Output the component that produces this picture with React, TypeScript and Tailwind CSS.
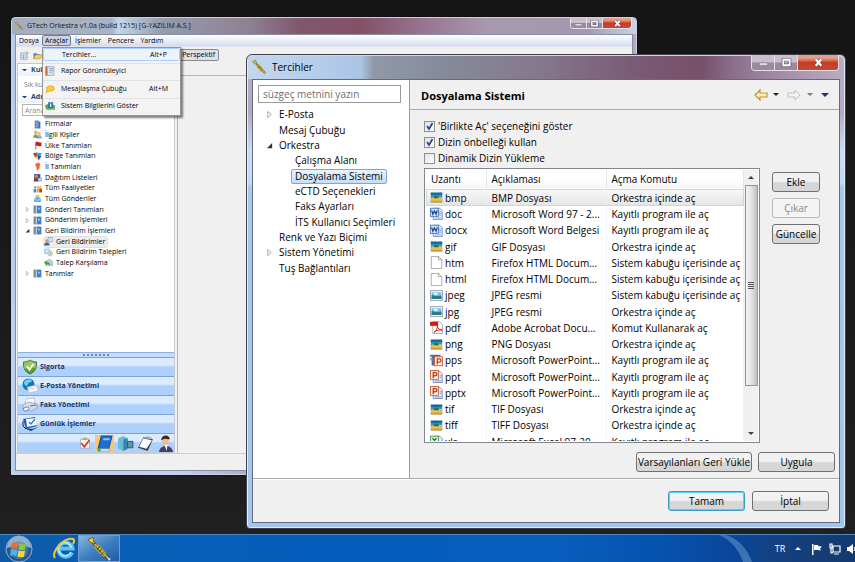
import type { ComponentProps, ReactNode } from "react";
import { clsx } from "clsx";

const FILE_TYPES = [
  { ext: "bmp", icon: "image", desc: "BMP Dosyası", cmd: "Orkestra içinde aç" },
  { ext: "doc", icon: "word", desc: "Microsoft Word 97 - 2...", cmd: "Kayıtlı program ile aç" },
  { ext: "docx", icon: "word", desc: "Microsoft Word Belgesi", cmd: "Kayıtlı program ile aç" },
  { ext: "gif", icon: "image", desc: "GIF Dosyası", cmd: "Orkestra içinde aç" },
  { ext: "htm", icon: "page", desc: "Firefox HTML Docum...", cmd: "Sistem kabuğu içerisinde aç" },
  { ext: "html", icon: "page", desc: "Firefox HTML Docum...", cmd: "Sistem kabuğu içerisinde aç" },
  { ext: "jpeg", icon: "photo", desc: "JPEG resmi", cmd: "Sistem kabuğu içerisinde aç" },
  { ext: "jpg", icon: "photo", desc: "JPEG resmi", cmd: "Orkestra içinde aç" },
  { ext: "pdf", icon: "pdf", desc: "Adobe Acrobat Docu...", cmd: "Komut Kullanarak aç" },
  { ext: "png", icon: "image", desc: "PNG Dosyası", cmd: "Orkestra içinde aç" },
  { ext: "pps", icon: "slides", desc: "Microsoft PowerPoint...", cmd: "Kayıtlı program ile aç" },
  { ext: "ppt", icon: "power", desc: "Microsoft PowerPoint...", cmd: "Kayıtlı program ile aç" },
  { ext: "pptx", icon: "power", desc: "Microsoft PowerPoint...", cmd: "Kayıtlı program ile aç" },
  { ext: "tif", icon: "image", desc: "TIF Dosyası", cmd: "Orkestra içinde aç" },
  { ext: "tiff", icon: "image", desc: "TIFF Dosyası", cmd: "Orkestra içinde aç" },
  { ext: "xls", icon: "excel", desc: "Microsoft Excel 97-20...", cmd: "Kayıtlı program ile aç" },
];

const PREFERENCES = [
  { label: "E-Posta", level: 0, arrow: "closed" },
  { label: "Mesaj Çubuğu", level: 0 },
  { label: "Orkestra", level: 0, arrow: "open" },
  { label: "Çalışma Alanı", level: 1 },
  { label: "Dosyalama Sistemi", level: 1, selected: true },
  { label: "eCTD Seçenekleri", level: 1 },
  { label: "Faks Ayarları", level: 1 },
  { label: "İTS Kullanıcı Seçimleri", level: 1 },
  { label: "Renk ve Yazı Biçimi", level: 0 },
  { label: "Sistem Yönetimi", level: 0, arrow: "closed" },
  { label: "Tuş Bağlantıları", level: 0 },
];

const NAV_TREE = [
  { label: "Firmalar", icon: "building", level: 0 },
  { label: "İlgili Kişiler", icon: "people", level: 0 },
  { label: "Ülke Tanımları", icon: "flag", level: 0 },
  { label: "Bölge Tanımları", icon: "region", level: 0 },
  { label: "İl Tanımları", icon: "city", level: 0 },
  { label: "Dağıtım Listeleri", icon: "list", level: 0 },
  { label: "Tüm Faaliyetler", icon: "activity", level: 0 },
  { label: "Tüm Gönderiler", icon: "send", level: 0 },
  { label: "Gönderi Tanımları", icon: "book", level: 0, arrow: "closed" },
  { label: "Gönderim İşlemleri", icon: "book", level: 0, arrow: "closed" },
  { label: "Geri Bildirim İşlemleri", icon: "book", level: 0, arrow: "open" },
  { label: "Geri Bildirimler", icon: "feedback", level: 1, selected: true },
  { label: "Geri Bildirim Talepleri", icon: "request", level: 1 },
  { label: "Talep Karşılama", icon: "reply", level: 1 },
  { label: "Tanımlar", icon: "book", level: 0, arrow: "closed" },
];

const TOOLS_MENU = [
  { label: "Tercihler...", shortcut: "Alt+P", icon: null },
  { label: "Rapor Görüntüleyici", shortcut: "", icon: "report" },
  { label: "Mesajlaşma Çubuğu", shortcut: "Alt+M", icon: "chat" },
  { label: "Sistem Bilgilerini Göster", shortcut: "", icon: "info" },
];

const SECTIONS = [
  { label: "Sigorta", icon: "shield" },
  { label: "E-Posta Yönetimi", icon: "mail" },
  { label: "Faks Yönetimi", icon: "fax" },
  { label: "Günlük İşlemler", icon: "daily" },
];

// All drawings share a 16x16 box
const GLYPHS: Record<string, ReactNode> = {
  image: (
    <>
      <rect x="1" y="2" width="14" height="12" fill="#2b9cc5" />
      <path d="M1 2h14v3H1z" fill="#1b6a9c" />
      <path d="M1 9c3-2 5 0 7-1s4-1 7 0v6H1z" fill="#edbd55" />
      <path d="M5 9V7l2-2 1 2 2-1 1 3z" fill="#2d6b3f" />
      <path d="M1 12h14v2H1z" fill="#d39a3c" />
    </>
  ),
  photo: (
    <>
      <rect x="0.5" y="2" width="15" height="12" fill="#f4f7fa" stroke="#8b98a6" />
      <path d="M2 4h12v8H2z" fill="#7cc0e6" />
      <path d="M2 7l5 2 7-1v4H2z" fill="#2d7d6b" />
      <path d="M2 10l6 1 6-1v2H2z" fill="#286fa5" />
      <path d="M4 5h5v2H6z" fill="#fff" />
    </>
  ),
  page: <path d="M1.5 0.5h9l4 4v11h-13zM10.5 0.5v4h4" fill="#fff" stroke="#9a9a9a" />,
  word: (
    <>
      <path d="M6 1.5h6l3 3v11H4V1.5z" fill="#e6effb" stroke="#6681b5" />
      <path d="M11 6h3M11 8h3M11 10h3M6 13.500h8" stroke="#7c9fd6" />
      <rect x="0.5" y="1.5" width="10" height="10" fill="#dce9fa" stroke="#3e69b3" />
      <path d="M2 4l1.500 5L5.500 5l2 4L9 4" fill="none" stroke="#1d4da1" strokeWidth="1.6" />
    </>
  ),
  power: (
    <>
      <path d="M6 1.5h6l3 3v11H4V1.5z" fill="#e8effa" stroke="#5d7fb9" />
      <path d="M6 13.5h8M12 7h2M12 9h2" stroke="#5889c9" />
      <rect x="0.5" y="0.5" width="10" height="11" fill="#fff0e8" stroke="#c5512b" />
      <path d="M4 10V3h2.500a2 2 0 010 4H4" fill="none" stroke="#c5401c" strokeWidth="1.7" />
    </>
  ),
  slides: (
    <>
      <path d="M0 1h13v2H0zM2 3h4v11H2z" fill="#4b6e9e" />
      <path d="M0 5h3v3H0z" fill="#8aa9d0" />
      <rect x="5.5" y="3.5" width="10" height="11" fill="#fff0e8" stroke="#c5512b" />
      <path d="M9 13V6h2.500a2 2 0 010 4H9" fill="none" stroke="#c5401c" strokeWidth="1.7" />
    </>
  ),
  excel: (
    <>
      <path d="M6 1.5h6l3 3v11H4V1.5z" fill="#e8f0fa" stroke="#5d7fb9" />
      <rect x="0.5" y="1.5" width="10" height="10" fill="#e3f3e1" stroke="#3d8b40" />
      <path d="M3 4l5 5M8 4L3 9" stroke="#2a7a31" strokeWidth="1.8" />
    </>
  ),
  pdf: (
    <>
      <path d="M3.5 0.5h8l4 4v11h-12z" fill="#fff" stroke="#9a9a9a" />
      <path d="M0 1h10v5H0z" fill="#d31d1d" />
      <path d="M5 14c3-2 4-5 4-8 1 4 3 5 6 5-4 0-7 0-10 3z" fill="none" stroke="#d02626" strokeWidth="1.200" />
    </>
  ),
  building: (
    <>
      <path d="M3 1h8v14H3z" fill="#4f77a8" />
      <path d="M11 3h2v12h-2z" fill="#2f4c77" />
      <path d="M4 3h6M4 6h6M4 9h6M4 12h6" stroke="#cfe0f3" />
    </>
  ),
  people: (
    <>
      <circle cx="5" cy="4" r="3" fill="#e6a96f" />
      <path d="M0 14c0-9 10-9 10 0z" fill="#8cc16b" />
      <circle cx="11" cy="6" r="3" fill="#f0bd84" />
      <path d="M6 15c0-8 10-8 10 0z" fill="#7fb3e6" />
      <path d="M3 10l6 4" stroke="#d94f36" strokeWidth="2" />
    </>
  ),
  flag: (
    <>
      <path d="M5 2v13" stroke="#666" strokeWidth="1.5" />
      <path d="M5 2c4-2 5 2 10 0v7c-5 2-6-2-10 0z" fill="#c81f26" />
    </>
  ),
  region: (
    <>
      <path d="M0 2l6-1 2 5-4 4z" fill="#e5232a" />
      <path d="M6 1l10 1-3 5H8z" fill="#1fb5e2" />
      <path d="M4 10l4-4 2 9z" fill="#f6dc16" />
      <path d="M8 6l7 1-5 8z" fill="#3a37e0" />
      <path d="M1 4l4 1-1 4z" fill="#27b73a" />
    </>
  ),
  city: <path d="M4 3l6-2 3 3-2 8-4 3-1-5z" fill="#ef6a2b" stroke="#f8b28a" />,
  list: (
    <>
      <path d="M2 2h11v11H2z" fill="#454e86" />
      <circle cx="6" cy="6" r="3" fill="#c98c64" />
      <path d="M1 15c0-7 9-7 9 0z" fill="#8a3340" />
      <path d="M9 9h6v5H9z" fill="#dfe8f3" stroke="#54749f" />
    </>
  ),
  activity: (
    <>
      <circle cx="4" cy="6" r="2" fill="#53a945" />
      <path d="M1 15V9h5v6z" fill="#2f91d1" />
      <path d="M8 3l3 2-1 10H7z" fill="#f2a52e" />
      <path d="M11 8h5v7h-5z" fill="#d33a2c" />
      <circle cx="13" cy="5" r="2" fill="#e8a56a" />
    </>
  ),
  send: (
    <>
      <circle cx="8" cy="5" r="4" fill="#f1cf52" />
      <path d="M2 8l6-3 6 3v6H2z" fill="#54b2e8" />
      <path d="M2 8l6 4 6-4" fill="none" stroke="#fff" />
    </>
  ),
  book: (
    <>
      <path d="M1 1h14v14H1z" fill="#7b8794" />
      <path d="M5 2h9v12H5z" fill="#3c7fcc" />
      <path d="M5 2h2v12H5z" fill="#c2d9f2" />
      <path d="M9 5h3v3H9z" fill="#a8d3f5" />
    </>
  ),
  feedback: (
    <>
      <path d="M7 1h9v7h-4l-3 3V8H7z" fill="#cfe5fb" stroke="#5e93cd" />
      <circle cx="5" cy="7" r="3" fill="#df9a5c" />
      <path d="M0 15c0-7 10-7 10 0z" fill="#3266a3" />
    </>
  ),
  request: (
    <>
      <path d="M1 2h9v7H6l-3 2V9H1z" fill="#d6e9fb" stroke="#6b9bd0" />
      <circle cx="11" cy="10" r="4" fill="#f6e7a6" stroke="#7a9ec5" />
      <path d="M11 8v4" stroke="#3a6ca5" />
    </>
  ),
  reply: (
    <>
      <path d="M4 6l6-4 6 5v6H4z" fill="#c7d3dd" stroke="#7b8c9b" />
      <path d="M0 8l5-4v3c5 0 7 3 5 8-1-4-2-4-5-4v3z" fill="#4aa53d" />
    </>
  ),
  report: (
    <>
      <path d="M1 1h13v14H1z" fill="#dfe7f2" stroke="#7a8fae" />
      <path d="M1 1h3v14H1z" fill="#c96a47" />
      <path d="M7 4h6M7 7h6M7 10h4" stroke="#4e7fbf" />
    </>
  ),
  chat: <path d="M2 7c0-5 13-6 13 0 0 4-5 5-8 4l-5 3 1-4z" fill="#fbcd2b" stroke="#dd9b12" />,
  info: (
    <>
      <path d="M0 7l6-3 10 3v7H2z" fill="#57ab47" />
      <path d="M5 2h8v9H5z" fill="#2d78c4" />
      <path d="M9 4v5" stroke="#fff" strokeWidth="2" />
      <path d="M1 12l6 3 8-3" stroke="#c3d9a3" fill="none" />
    </>
  ),
  shield: (
    <>
      <path d="M8 1c2 1.5 4 2 6.5 2 0 6-1 9.5-6.5 12C2.5 12.5 1.5 9 1.5 3 4 3 6 2.5 8 1z" fill="#5c9e2f" stroke="#3d7220" />
      <path d="M8 1.5c2 1.5 4 2 6 2 0 3 0 4-1 6-4-2-7-2-10 1-1-2-1-4-1-7 2 0 4-.5 6-2z" fill="#97c765" />
      <path d="M5 7.5l2.5 3L11.5 5" fill="none" stroke="#fff" strokeWidth="2" />
    </>
  ),
  mail: (
    <>
      <circle cx="6.5" cy="6.5" r="6" fill="#1476bd" />
      <path d="M2 4c3-4 7-3 8-1-2 3-3 0-4 3S2 8 2 4z" fill="#74d0f2" />
      <path d="M5 9l10-2 1 6-9 2z" fill="#f4f6f8" stroke="#a6b0ba" strokeWidth="0.5" />
      <path d="M5 9l6 2 4-4" fill="none" stroke="#a6b0ba" strokeWidth="0.6" />
    </>
  ),
  fax: (
    <>
      <path d="M4 2l8-1 1 6H3z" fill="#fdfdff" stroke="#8fa3c0" strokeWidth="0.6" />
      <path d="M1 8l5-3 9 2v4l-6 3-8-2z" fill="#d4dcea" stroke="#7f8fac" strokeWidth="0.6" />
      <path d="M1 12c3-3 7-2 6 0s-6 3-6 0z" fill="#f4f6fa" stroke="#6b7a95" />
      <path d="M8 9l6-1" stroke="#5470a5" />
    </>
  ),
  daily: (
    <>
      <path d="M1 3l12-2 2 9-11 3z" fill="#1b5fae" />
      <path d="M4 3l10-1 1 7-10 2z" fill="#f3f8ff" />
      <path d="M7 6l2 2 4-5" fill="none" stroke="#2a7bd0" strokeWidth="1.3" />
      <path d="M2 12l8 1 6-2-7 4z" fill="#23345b" />
      <path d="M1 5v5l3 3" stroke="#222" fill="none" />
    </>
  ),
  check: (
    <>
      <path d="M2 3h12v12H2z" fill="#f6f7fb" stroke="#9da7bb" />
      <path d="M5 1h6v3H5z" fill="#d7a35a" />
      <path d="M3 8l4 5 7-9" fill="none" stroke="#e03c22" strokeWidth="2.5" />
    </>
  ),
  notebook: (
    <>
      <path d="M5 1h10l-3 12H2z" fill="#1f6fd0" stroke="#144d98" />
      <path d="M2 13h10l1 2H3z" fill="#f0f5fb" stroke="#6789b3" strokeWidth="0.5" />
      <path d="M7 3h6l-.5 2h-6z" fill="#8fc3f6" />
      <circle cx="3" cy="14" r="1.5" fill="#33b13a" />
    </>
  ),
  server: (
    <>
      <path d="M1 3l5-2 4 2v10l-4 2-5-2z" fill="#6dbbda" />
      <path d="M6 4l4-1v10l-4 2z" fill="#3485a8" />
      <path d="M10 6h5v6h-5z" fill="#5f95b5" stroke="#1f4e6c" strokeWidth="0.8" />
    </>
  ),
  clipboard: (
    <>
      <path d="M6 2l9 2-5 11-9-3z" fill="#3c4250" />
      <path d="M6 3l8 2-5 8-7-2z" fill="#fafbfc" />
      <path d="M9 1l5 1-1 2-5-1z" fill="#aab1bd" />
    </>
  ),
  person: (
    <>
      <path d="M2 16c0-7 12-8 13 0z" fill="#3d3f6d" />
      <path d="M7 9l2 6 1-6z" fill="#fff" />
      <ellipse cx="8" cy="5.500" rx="3" ry="4" fill="#eeb98b" />
      <path d="M4 5c0-6 8-6 8-1-3 0-5-1-6 0z" fill="#3a2419" />
    </>
  ),
  perspective: (
    <>
      <rect x="1.5" y="3.5" width="11" height="11" fill="#eef5fb" stroke="#5d83ae" />
      <path d="M2 7h10M6 7v7M2 11h10" stroke="#5d83ae" />
      <path d="M11 1h4v4h-4z" fill="#eebc32" />
    </>
  ),
  folder: (
    <>
      <path d="M1 14V4h5l2 2h5v8z" fill="#4b7fbd" />
      <path d="M1 14l3-7h12l-3 7z" fill="#f3cf72" stroke="#b88d32" />
    </>
  ),
};

function Glyph({ name, className }: { name: string; className: string }) {
  return (
    <svg viewBox="0 0 16 16" className={clsx("shrink-0", className)} aria-hidden="true">
      {GLYPHS[name]}
    </svg>
  );
}

function Trumpet({ className }: { className: string }) {
  return (
    <svg viewBox="0 0 24 24" className={clsx("shrink-0", className)} aria-hidden="true">
      <path d="M3 2l19 20" stroke="#473a08" strokeWidth="2.6" />
      <path d="M3 2l18 19" stroke="#ecca3c" strokeWidth="1.4" />
      <path d="M1 3l5-3c0 3 1 5 2 7-3-1-5-2-7-4z" fill="#f0d24a" stroke="#5e4b0c" strokeWidth="0.8" />
      <path d="M8 11c0-3 3-4 5-1l5 6c1 2-1 4-3 2z" fill="none" stroke="#c29f22" strokeWidth="1.4" />
      <path d="M10 13l3-4M12 15l3-3M14 18l3-3" stroke="#6f590f" />
      <path d="M21 21l2 2" stroke="#ddd" strokeWidth="2" />
    </svg>
  );
}

function Expander({ state, className }: { state?: string; className: string }) {
  return (
    <svg viewBox="0 0 8 8" className={clsx("shrink-0", className)} aria-hidden="true">
      {state === "closed" && <path d="M2 .5L6 4 2 7.5z" fill="#fff" stroke="#9a9a9a" />}
      {state === "open" && <path d="M7 1v6H1z" fill="#333" />}
    </svg>
  );
}

function Triangle({ className, up }: { className: string; up?: boolean }) {
  return (
    <svg viewBox="0 0 8 4" className={clsx("shrink-0", className)} aria-hidden="true">
      <path d={up ? "M0 4l4-4 4 4z" : "M0 0h8L4 4z"} fill="currentColor" />
    </svg>
  );
}

const CAPTION_GLASS =
  "flex items-center justify-center border-r border-[#e6dfe8] bg-linear-to-b from-[#cdbecd] from-45% to-[#9a8aa0] to-55%";

function CaptionButtons({ small }: { small?: boolean }) {
  const size = small ? "h-[10px] w-4" : "h-[15px] w-[23px]";
  const icon = small ? "size-[9px]" : "size-[11px]";
  return (
    <div className="flex self-start overflow-hidden rounded-b border border-t-0 border-[#e6dfe8]">
      <button aria-label="Simge durumuna küçült" className={clsx(CAPTION_GLASS, size)}>
        <svg viewBox="0 0 12 12" className={icon}>
          <path d="M1.5 6.5h9v2.500h-9z" fill="#eee" stroke="#777" strokeWidth="0.6" />
        </svg>
      </button>
      <button aria-label="Ekranı kapla" className={clsx(CAPTION_GLASS, size)}>
        <svg viewBox="0 0 12 12" className={icon}>
          <path d="M2.5 3h7v6h-7z" fill="none" stroke="#5b6070" strokeWidth="3.5" />
          <path d="M2.5 3h7v6h-7z" fill="none" stroke="#fff" strokeWidth="2" />
        </svg>
      </button>
      <button
        aria-label="Kapat"
        className={clsx(
          "flex items-center justify-center bg-linear-to-b from-[#e0a090] from-20% via-[#c83a22] to-[#bf4a38]",
          small ? "h-[10px] w-7" : "h-[15px] w-10"
        )}
      >
        <svg viewBox="0 0 12 12" className={icon}>
          <path d="M3 2.5l6 7M9 2.5l-6 7" stroke="#6d4444" strokeWidth="3.6" />
          <path d="M3 2.5l6 7M9 2.5l-6 7" stroke="#fff" strokeWidth="2.4" />
        </svg>
      </button>
    </div>
  );
}

function ToolsMenu() {
  return (
    <ul className="absolute top-3 left-[26px] z-10 flex h-[69px] w-[139px] flex-col justify-between border border-[#979797] bg-[#f3f3f3] pb-px shadow-[2px_2px_2px_rgba(0,0,0,0.5)]">
      {TOOLS_MENU.map((item, index) => (
        <li key={item.label} className={clsx(index > 0 && "border-t border-[#e2e2e2]")}>
          <button
            className={clsx(
              "flex w-full items-center pr-3 pl-0.5 text-left",
              index === 0 ? "h-[13px] rounded-xs border border-[#aecff7] bg-[#edf3fb]" : "h-[15px]"
            )}
          >
            <span className="flex w-4 items-center">
              {item.icon && <Glyph name={item.icon} className="size-2.5" />}
            </span>
            <span className="flex-1">{item.label}</span>
            <span>{item.shortcut}</span>
          </button>
        </li>
      ))}
    </ul>
  );
}

function MainWindow() {
  return (
    <section className="absolute top-[17px] right-[218px] bottom-[87px] left-[11px] flex flex-col rounded-t border border-[#c9d3e4] bg-[linear-gradient(100deg,#b5cdec_0%,#bcd3f2_35%,#9a6f94_60%,#c7b8d0_100%)] px-[3px] pb-[3px] text-[7px] leading-[10px] text-black shadow-[0_0_2px_#000]">
      <header className="-mx-[3px] flex h-[16px] items-center gap-[3px] rounded-t bg-[linear-gradient(90deg,#a4adbd_0%,#aab3c4_16%,#c2d6ee_17%,#959cad_24%,#8e8193_38%,#80576f_46%,#855068_56%,#977590_66%,#a798ae_76%,#a498ae_92%,#c4d5ea_100%)] pl-[3px]">
        <Trumpet className="size-[9px]" />
        <h1 className="flex-1 text-[7px] text-[#151515]">GTech Orkestra v1.0a (build 1215) [G-YAZILIM A.S.]</h1>
        <div className="self-start pr-1">
          <CaptionButtons small />
        </div>
      </header>

      <div className="relative flex min-h-0 flex-1 flex-col border border-[#8a8fa0] bg-[#f0f0f0]">
        <nav className="flex h-3 items-center border-b border-[#dfe3ef] bg-linear-to-b from-white to-[#d5dcef]">
          <button className="w-[26px]">Dosya</button>
          <button className="h-[11px] w-[29px] rounded-xs border border-[#777d8c] bg-[#ccd2e0] leading-[9px]">Araçlar</button>
          <button className="w-[34px]">İşlemler</button>
          <button className="w-[32px]">Pencere</button>
          <button className="w-[30px]">Yardım</button>
        </nav>
        <ToolsMenu />

        <div className="flex h-4 items-center gap-1 pl-1">
          <Glyph name="perspective" className="size-[9px]" />
          <Glyph name="folder" className="size-[9px]" />
          <button className="ml-[103px] h-3 w-[70px] rounded-xs border border-[#8b8b8b] bg-[#e1e1e1] pr-[3px] text-right">
            l Perspektif
          </button>
        </div>

        <div className="flex min-h-0 flex-1">
          <aside className="ml-px flex w-[158px] flex-col border border-[#c5cad2] bg-white">
            <h2 className="flex h-3 items-center gap-1 bg-linear-to-b from-white to-[#edf2f9] pl-1 font-bold text-[#1d477f]">
              <Triangle className="w-[5px]" />
              Kull
            </h2>
            <p className="h-[15px] pt-1 pl-1.5 text-[#777]">Sık ku</p>
            <h2 className="flex h-3 items-center gap-1 bg-linear-to-b from-white to-[#edf2f9] pl-1 font-bold text-[#1d477f]">
              <Triangle className="w-[5px]" />
              Adr
            </h2>
            <input
              aria-label="Arama"
              placeholder="Arana"
              className="mx-1 mt-px h-3 border border-[#b5b5b5] bg-white px-0.5 placeholder:text-[#888]"
            />
            <ul className="mt-[3px] grid h-[160px] auto-rows-fr">
              {NAV_TREE.map((node) => (
                <li key={node.label} className={clsx("flex items-center", node.level ? "pl-[18px]" : "pl-[7px]")}>
                  <Expander state={node.arrow} className="mr-[3px] size-[5px]" />
                  <button
                    className={clsx(
                      "flex h-[10px] items-center gap-[3px] whitespace-nowrap pr-0.5",
                      node.selected && "rounded-xs bg-[#ececec] outline outline-[#e0e0e0]"
                    )}
                  >
                    <Glyph name={node.icon} className="size-[9px]" />
                    {node.label}
                  </button>
                </li>
              ))}
            </ul>
            <div className="flex-1" />
            <div className="flex h-[5px] items-center justify-center border-t border-[#8fb0de] bg-[#c4dcfb]">
              <span className="w-[26px] border-t-2 border-dotted border-[#6d86ab]" />
            </div>
            {SECTIONS.map((section) => (
              <button
                key={section.label}
                className="flex h-[19px] items-center gap-0.5 border-t border-[#7da2d6] bg-linear-to-b from-[#dcebff] from-40% to-[#add0fd] to-50% pl-1 font-bold text-[#17356a]"
              >
                <Glyph name={section.icon} className="size-4" />
                {section.label}
              </button>
            ))}
            <div className="flex h-[19px] items-center justify-end gap-[3px] border-t border-[#7da2d6] bg-linear-to-b from-[#dcebff] from-40% to-[#add0fd] to-50%">
              <button aria-label="Görevler" className="mr-px">
                <Glyph name="check" className="size-3" />
              </button>
              <button aria-label="Adres defteri" className="bg-[#fbc66f] px-px">
                <Glyph name="notebook" className="size-[17px]" />
              </button>
              <button aria-label="Sunucu">
                <Glyph name="server" className="size-[17px]" />
              </button>
              <button aria-label="Pano">
                <Glyph name="clipboard" className="size-[17px]" />
              </button>
              <button aria-label="Kullanıcı">
                <Glyph name="person" className="size-[17px]" />
              </button>
            </div>
          </aside>
          <main className="mt-3 ml-0.5 flex-1 border-t border-l border-[#b7b7b7]" />
        </div>
        <footer className="h-[17px] border-t border-[#cfcfcf]" />
      </div>
    </section>
  );
}

function Check({ label, checked }: { label: string; checked?: boolean }) {
  return (
    <label className="flex h-4 items-center gap-[3px]">
      <span className="grid">
        <input
          type="checkbox"
          defaultChecked={checked}
          className="peer col-start-1 row-start-1 size-[11px] appearance-none border border-[#8e8f8f] bg-linear-to-br from-[#dfe2e6] to-white"
        />
        <svg viewBox="0 0 11 11" className="invisible col-start-1 row-start-1 size-[11px] peer-checked:visible">
          <path d="M3 5l2 3 3.5-6" fill="none" stroke="#32478f" strokeWidth="1.8" />
        </svg>
      </span>
      {label}
    </label>
  );
}

function PushButton({ children, className, ...rest }: ComponentProps<"button">) {
  return (
    <button
      {...rest}
      className={clsx(
        "h-5 rounded-[3px] border text-center whitespace-nowrap",
        rest.disabled
          ? "border-[#b8bcbf] bg-[#f4f4f4] text-[#8a8a8a]"
          : "bg-linear-to-b from-[#f2f2f2] from-45% to-[#d6d6d6] to-55%",
        className
      )}
    >
      {children}
    </button>
  );
}

function FileTypeTable() {
  return (
    <div className="flex h-[275px] min-w-0 flex-1 border border-[#828790] bg-white p-px">
      <div className="min-w-0 flex-1 overflow-hidden">
        <table className="h-[280px] w-full table-fixed border-collapse text-left whitespace-nowrap">
          <thead>
            <tr className="h-[19px] border-b border-[#d9dbdd] bg-linear-to-b from-white from-50% to-[#f5f6f8]">
              <th className="w-[60px] border-r border-[#e3e8ee] pl-[5px] font-normal">Uzantı</th>
              <th className="w-[120px] border-r border-[#e3e8ee] pl-[5px] font-normal">Açıklaması</th>
              <th className="border-r border-[#e3e8ee] pl-[5px] font-normal">Açma Komutu</th>
            </tr>
          </thead>
          <tbody>
            {FILE_TYPES.map((file, index) => (
              <tr
                key={file.ext}
                className={clsx(
                  index === 0 &&
                    "bg-linear-to-b from-[#f9f9f9] to-[#e4e4e4] outline outline-offset-[-1px] outline-[#d5d5d5]"
                )}
              >
                <td className="border-r border-[#eef4fb] pl-1 align-middle">
                  <span className="flex items-center gap-0.5">
                    <Glyph name={file.icon} className="size-[13px]" />
                    {file.ext}
                  </span>
                </td>
                <td className="border-r border-[#eef4fb] pl-[5px] align-middle">{file.desc}</td>
                <td className="border-r border-[#eef4fb] pl-[5px] align-middle">{file.cmd}</td>
              </tr>
            ))}
          </tbody>
        </table>
      </div>
      <div className="flex w-[14px] flex-col items-center bg-[#f0f0f0] text-[#444]">
        <button aria-label="Yukarı kaydır" className="flex h-[15px] items-center">
          <Triangle up className="w-1.5" />
        </button>
        <div className="flex h-[201px] w-[13px] flex-col items-center justify-center gap-px border border-[#979797] bg-linear-to-r from-[#f3f3f3] via-[#e3e3e5] to-[#bfc0c4]">
          <span className="h-px w-1.5 bg-[#555]" />
          <span className="h-px w-1.5 bg-[#555]" />
          <span className="h-px w-1.5 bg-[#555]" />
          <span className="h-px w-1.5 bg-[#555]" />
        </div>
        <button aria-label="Aşağı kaydır" className="mt-auto flex h-4 items-center">
          <Triangle className="w-1.5" />
        </button>
      </div>
    </div>
  );
}

function NavArrow({ forward }: { forward?: boolean }) {
  return (
    <svg viewBox="0 0 14 12" className="h-3 w-3.5" aria-hidden="true">
      {forward ? (
        <path d="M13 6L8 1v3H1v4h7v3z" fill="#f6f4ef" stroke="#c3bfb6" />
      ) : (
        <path d="M1 6l5-5v3h7v4H6v3z" fill="#fdeebd" stroke="#cb932a" strokeWidth="1.2" />
      )}
    </svg>
  );
}

function PreferencesDialog() {
  return (
    <section className="absolute top-[54px] right-[9px] bottom-[33px] left-[246px] flex flex-col rounded-t-md rounded-b border border-[#3f4149] bg-[linear-gradient(180deg,#b9aec6_0%,#b4a8c2_12%,#c9dcf4_20%,#c4daf5_27%,#a6c8f0_28%,#a3c4ec_100%)] p-[5px] pt-0 text-[10px] leading-[14px] text-black inset-ring inset-ring-[#e3eefc]">
      <header className="-mx-1 flex h-6 items-center gap-[5px] rounded-t-md bg-[linear-gradient(90deg,#c3d6ee_0%,#b5cdea_12%,#a9c4e4_19%,#9199a8_21%,#858b9a_32%,#857a8c_48%,#7a5a74_65%,#775069_76%,#8d7290_82%,#a48fa8_90%,#b9acc0_100%)] pl-1 shadow-[inset_0_1px_0_#ddd3e0]">
        <Trumpet className="size-[15px]" />
        <h2 className="flex-1">Tercihler</h2>
        <div className="self-start pr-[5px]">
          <CaptionButtons />
        </div>
      </header>

      <div className="flex min-h-0 flex-1 flex-col border border-[#666b78] bg-[#f0f0f0]">
        <div className="flex min-h-0 flex-1 border-b border-[#a9a9a9]">
          <aside className="w-[157px] shrink-0 border-r border-[#a0a0a0] bg-white">
            <input
              aria-label="Süzgeç"
              placeholder="süzgeç metnini yazın"
              className="mx-[5px] mt-[5px] block h-[18px] w-[143px] border border-[#9a9a9a] px-1 placeholder:text-[#6d6d6d]"
            />
            <ul className="mt-1 grid h-[169px] auto-rows-fr">
              {PREFERENCES.map((item) => (
                <li key={item.label} className={clsx("flex items-center", item.level ? "pl-[29px]" : "pl-[13px]")}>
                  <Expander state={item.arrow} className="size-[7px]" />
                  <button
                    className={clsx(
                      "ml-[2px] h-[15px] rounded-xs border px-[3px] leading-[13px] whitespace-nowrap",
                      item.selected
                        ? "border-[#7da7d9] bg-linear-to-b from-[#eaf4ff] to-[#c4defc]"
                        : "border-transparent"
                    )}
                  >
                    {item.label}
                  </button>
                </li>
              ))}
            </ul>
          </aside>

          <div className="flex min-w-0 flex-1 flex-col">
            <div className="flex h-[30px] shrink-0 items-center border-b border-[#a9a9a9] pr-[10px] pl-[11px]">
              <h3 className="flex-1 pt-0.5 text-[11px] font-bold">Dosyalama Sistemi</h3>
              <div className="flex items-center">
                <button aria-label="Geri">
                  <NavArrow />
                </button>
                <button aria-label="Geri geçmişi" className="ml-[5px]">
                  <Triangle className="w-1.5 text-[#222]" />
                </button>
                <button aria-label="İleri" disabled className="ml-2">
                  <NavArrow forward />
                </button>
                <button aria-label="İleri geçmişi" className="ml-1.5">
                  <Triangle className="w-1.5 text-[#777]" />
                </button>
                <button aria-label="Menü" className="ml-2">
                  <Triangle className="w-2 text-[#322b6b]" />
                </button>
              </div>
            </div>

            <div className="flex flex-1 flex-col pt-2 pr-1 pl-[14px]">
              <Check label="'Birlikte Aç' seçeneğini göster" checked />
              <Check label="Dizin önbelleği kullan" checked />
              <Check label="Dinamik Dizin Yükleme" />
              <div className="mt-0.5 flex gap-3">
                <FileTypeTable />
                <div className="mr-[15px] flex w-12 flex-col gap-1.5 pt-1">
                  <PushButton className="border-[#707070]">Ekle</PushButton>
                  <PushButton disabled>Çıkar</PushButton>
                  <PushButton className="border-[#707070]">Güncelle</PushButton>
                </div>
              </div>
              <div className="mt-[9px] flex justify-end gap-1.5">
                <PushButton className="w-[116px] border-[#707070]">Varsayılanları Geri Yükle</PushButton>
                <PushButton className="w-[77px] border-[#707070]">Uygula</PushButton>
              </div>
            </div>
          </div>
        </div>

        <footer className="flex h-[43px] items-center justify-end gap-[7px] border-t border-white pr-[10px]">
          <PushButton className="w-[77px] border-[#3c9ac6] inset-ring inset-ring-[#5fd0f5]">Tamam</PushButton>
          <PushButton className="w-[77px] border-[#707070]">İptal</PushButton>
        </footer>
      </div>
    </section>
  );
}

function Taskbar() {
  return (
    <footer className="absolute inset-x-0 bottom-0 flex h-7 items-center border-t border-[#4a8ac4] bg-[linear-gradient(90deg,#0f5aa5_0%,#0a5fb8_15%,#045dbb_45%,#0a5ebc_65%,#0551ae_78%,#0a4698_86%,#15407f_91%,#14396f_100%)]">
      <button aria-label="Başlat" className="ml-[5px]">
        <svg viewBox="0 0 28 28" className="size-7">
          <circle cx="14" cy="14" r="13" fill="#27598f" stroke="#8db3d6" />
          <path d="M2 13a12 12 0 0124 0c-8-3-16-3-24 0z" fill="#8fb2cc" />
          <circle cx="14" cy="15" r="9" fill="#4f90bd" opacity="0.6" />
          <path d="M7 8c2-1 4.500-1 6.500 0l-1 6c-2-1-4.500-1-6.500 0z" fill="#ef6b2e" />
          <path d="M14.500 8.500c2 1 4.500 1 6.500 0l-1 6c-2 1-4.500 1-6.500 0z" fill="#8cc63c" />
          <path d="M6 15c2-1 4.500-1 6.500 0l-1 6c-2-1-4.500-1-6.500 0z" fill="#4ab1ec" />
          <path d="M13.500 15.500c2 1 4.500 1 6.500 0l-1 6c-2 1-4.500 1-6.500 0z" fill="#fcd43c" />
        </svg>
      </button>
      <button aria-label="Internet Explorer" className="ml-[19px]">
        <svg viewBox="0 0 26 26" className="size-[26px]">
          <path d="M20 16.500a7 7 0 11.500-4H8" fill="none" stroke="#5cc3f3" strokeWidth="4" />
          <path d="M19 16a6.500 6.500 0 11.500-4" fill="none" stroke="#c8edfc" strokeWidth="1.3" />
          <path d="M3 22C-1 16 12 1 21 3c2 1 1 3 0 5" fill="none" stroke="#f3c62f" strokeWidth="2" />
        </svg>
      </button>
      <button
        aria-label="GTech Orkestra"
        className="flex h-full w-[42px] items-center justify-center border border-[#6e9fd0] bg-linear-to-br from-[#8ab4de] via-[#3f7fc0] to-[#1a5da8]"
      >
        <Trumpet className="size-6" />
      </button>
      <svg viewBox="0 0 40 27" className="ml-auto h-[27px] w-10" aria-hidden="true">
        <path d="M0 0c14 6 20 16 24 27h9C29 15 20 4 7 0z" fill="#7aa9dc" opacity="0.45" />
      </svg>
      <div className="ml-2.5 flex items-center text-white">
        <button className="w-[22px] text-[9px] leading-3">TR</button>
        <button aria-label="Gizli simgeler" className="ml-1">
          <Triangle up className="w-1.5" />
        </button>
        <svg viewBox="0 0 12 12" className="ml-2.5 size-3" aria-hidden="true">
          <path d="M1 1h1.500v11H1zM3 2h4v1l4 .5-2 2 1 2-3-.5H3z" fill="#fff" />
        </svg>
        <svg viewBox="0 0 12 12" className="ml-1.5 size-3" aria-hidden="true">
          <path d="M4 3h7v6H4zM5 11h5M1 1h2v4H1zM2 5v5h2" fill="none" stroke="#fff" strokeWidth="1.2" />
        </svg>
        <svg viewBox="0 0 12 12" className="-mr-1 ml-1.5 size-3" aria-hidden="true">
          <path d="M0 4h2l4-3v10L2 8H0z" fill="#fff" />
          <path d="M7 4q2 2 0 4M9 2q3 4 0 8" fill="none" stroke="#fff" />
        </svg>
      </div>
    </footer>
  );
}

export default function App() {
  return (
    <div className="relative h-screen overflow-hidden bg-[#181818] bg-linear-to-b from-[#151515] to-[#202020] font-['Open_Sans','Noto_Sans',sans-serif]">
      <MainWindow />
      <PreferencesDialog />
      <Taskbar />
    </div>
  );
}
